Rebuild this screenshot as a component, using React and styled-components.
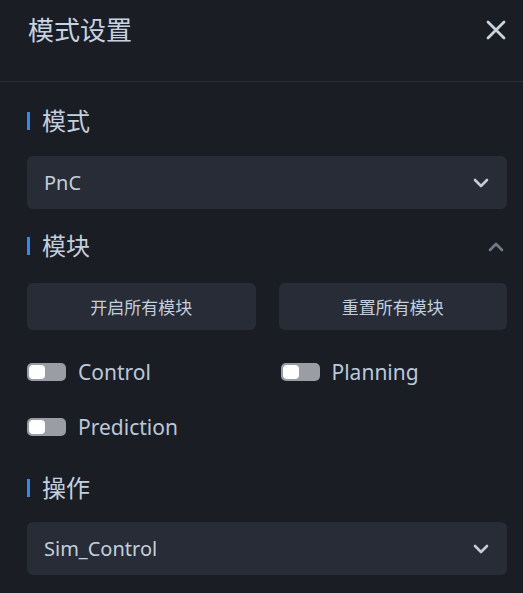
import styled, { createGlobalStyle } from 'styled-components';

const Global = createGlobalStyle`
  html, body {
    margin: 0;
    padding: 0;
    background: #1a1d24;
  }
  body {
    font-family: "Noto Sans", "Noto Sans CJK SC", sans-serif;
  }
`;

const Panel = styled.div`
  width: 523px;
  height: 593px;
  background: #1a1d24;
  color: #c2cfde;
  overflow: hidden;
`;

const Header = styled.div`
  height: 82px;
  border-bottom: 1px solid #2a2e36;
  display: flex;
  justify-content: space-between;
  align-items: flex-start;
  padding: 12px 16px 0 28px;
  box-sizing: border-box;
`;

const Title = styled.h1`
  margin: 0;
  font-size: 26px;
  font-weight: 400;
  line-height: 36px;
  color: #c6d3e2;
`;

const Close = styled.button`
  border: 0;
  background: none;
  padding: 0;
  margin-top: 7px;
  width: 22px;
  height: 22px;
  display: flex;
  align-items: center;
  justify-content: center;
  cursor: pointer;
`;

const Body = styled.div`
  padding: 0 16px 0 27px;
`;

const SectionTitle = styled.div`
  display: flex;
  align-items: center;
  justify-content: space-between;
  margin-top: ${(p) => p.$top}px;
  height: 36px;
`;

const Label = styled.h2`
  margin: 0;
  font-size: 24px;
  font-weight: 400;
  line-height: 36px;
  color: #c2cfde;
  display: flex;
  align-items: center;
  gap: 12px;

  &::before {
    content: '';
    width: 3px;
    height: 18px;
    background: #2f8af5;
  }
`;

const Select = styled.div`
  margin-top: ${(p) => p.$top}px;
  height: 53px;
  border-radius: 6px;
  background: #272c36;
  display: flex;
  align-items: center;
  justify-content: space-between;
  padding: 0 18px 0 17px;
  box-sizing: border-box;
  font-size: 20px;
  color: #c2cfde;
`;

const Grid = styled.div`
  display: grid;
  grid-template-columns: 1fr 1fr;
  column-gap: ${(p) => p.$gap}px;
  row-gap: 15px;
  margin-top: ${(p) => p.$top}px;
`;

const Button = styled.button`
  height: 47px;
  border: 0;
  border-radius: 6px;
  background: #272c36;
  color: #c2cfde;
  font-family: inherit;
  font-size: 17px;
  cursor: pointer;
`;

const ToggleRow = styled.label`
  height: 40px;
  display: flex;
  align-items: center;
  gap: 12px;
  font-size: 21px;
  color: #b9c8da;
`;

const Switch = styled.span`
  width: 39px;
  height: 18px;
  border-radius: 5px;
  background: #9a9da3;
  box-sizing: border-box;
  padding: 2px;
  display: flex;
  align-items: center;

  &::after {
    content: '';
    width: 16px;
    height: 14px;
    border-radius: 4px;
    background: #ffffff;
  }
`;

function Chevron({ up, color }) {
  return (
    <svg width="16" height="10" viewBox="0 0 16 10">
      <path
        d={up ? 'M2 8 L8 2 L14 8' : 'M2 2 L8 8 L14 2'}
        fill="none"
        stroke={color}
        strokeWidth="2.6"
        strokeLinecap="round"
        strokeLinejoin="round"
      />
    </svg>
  );
}

const modules = ['Control', 'Planning', 'Prediction'];

export default function App() {
  return (
    <Panel>
      <Global />
      <Header>
        <Title>模式设置</Title>
        <Close aria-label="close">
          <svg width="22" height="22" viewBox="0 0 22 22">
            <path
              d="M3 3 L19 19 M19 3 L3 19"
              stroke="#c8d3df"
              strokeWidth="2.8"
              strokeLinecap="round"
            />
          </svg>
        </Close>
      </Header>
      <Body>
        <SectionTitle $top={21}>
          <Label>模式</Label>
        </SectionTitle>
        <Select $top={17}>
          PnC
          <Chevron color="#c3ccd8" />
        </Select>

        <SectionTitle $top={19}>
          <Label>模块</Label>
          <span style={{ marginRight: 3 }}>
            <Chevron up color="#737a87" />
          </span>
        </SectionTitle>
        <Grid $top={19} $gap={23}>
          <Button>开启所有模块</Button>
          <Button>重置所有模块</Button>
        </Grid>
        <Grid $top={22} $gap={27}>
          {modules.map((m) => (
            <ToggleRow key={m}>
              <Switch />
              {m}
            </ToggleRow>
          ))}
        </Grid>

        <SectionTitle $top={23}>
          <Label>操作</Label>
        </SectionTitle>
        <Select $top={16}>
          Sim_Control
          <Chevron color="#c3ccd8" />
        </Select>
      </Body>
    </Panel>
  );
}
